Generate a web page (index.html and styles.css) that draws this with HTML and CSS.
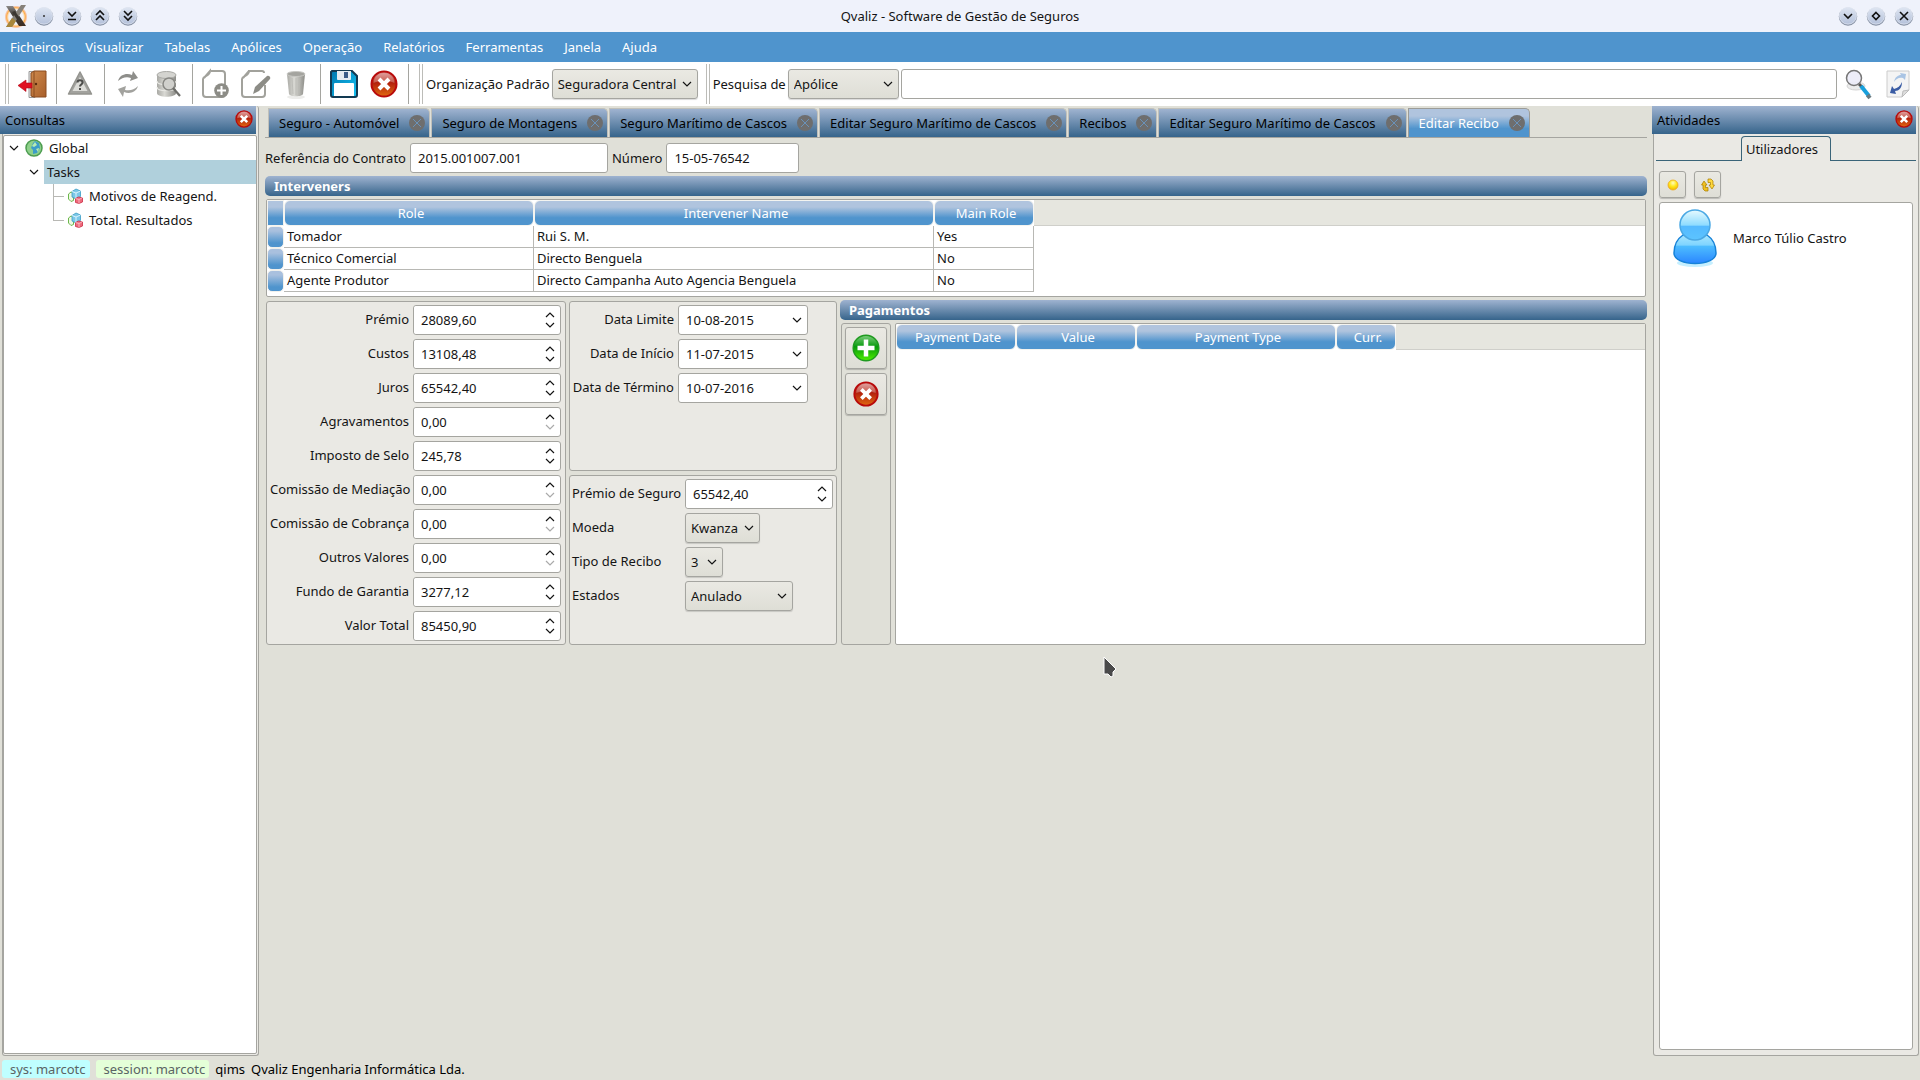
FILE: index.html
```html
<!DOCTYPE html>
<html lang="pt">
<head>
    <meta charset="UTF-8">
    <meta name="viewport" content="width=device-width, initial-scale=1.0">
    <title>Qvaliz - Software de Gestão de Seguros</title>
    <link rel="stylesheet" href="styles.css">
</head>
<body>
    <!-- shared icons -->
    <svg class="defs" width="0" height="0" aria-hidden="true">
        <defs>
            <linearGradient id="gRed" x1="0" y1="0" x2="0" y2="1">
                <stop offset="0" stop-color="#d98a8a"/><stop offset=".45" stop-color="#b3200c"/><stop offset="1" stop-color="#e06a10"/>
            </linearGradient>
            <linearGradient id="gGreen" x1="0" y1="0" x2="0" y2="1">
                <stop offset="0" stop-color="#7fce7f"/><stop offset=".45" stop-color="#069a0c"/><stop offset="1" stop-color="#4ff000"/>
            </linearGradient>
            <linearGradient id="gGrey" x1="0" y1="0" x2="1" y2="0">
                <stop offset="0" stop-color="#a9a9a4"/><stop offset=".4" stop-color="#d9d9d4"/><stop offset="1" stop-color="#8d8d88"/>
            </linearGradient>
            <linearGradient id="gDoor" x1="0" y1="0" x2="1" y2="1">
                <stop offset="0" stop-color="#cf8a4c"/><stop offset="1" stop-color="#a85f2a"/>
            </linearGradient>
            <linearGradient id="gSave" x1="0" y1="0" x2="1" y2="1">
                <stop offset="0" stop-color="#0078b0"/><stop offset="1" stop-color="#14c4f4"/>
            </linearGradient>
            <linearGradient id="gHead" x1="0" y1="0" x2="0" y2="1">
                <stop offset="0" stop-color="#e6faff"/><stop offset=".5" stop-color="#8fdcff"/><stop offset=".55" stop-color="#55baff"/><stop offset="1" stop-color="#5cc4ff"/>
            </linearGradient>
            <linearGradient id="gBody" x1="0" y1="0" x2="0" y2="1">
                <stop offset="0" stop-color="#a8e6ff"/><stop offset=".35" stop-color="#7fd4ff"/><stop offset=".4" stop-color="#4dbcff"/><stop offset="1" stop-color="#2a86ff"/>
            </linearGradient>
            <linearGradient id="gWin" x1="0" y1="0" x2="0" y2="1">
                <stop offset="0" stop-color="#dfe6f2"/><stop offset="1" stop-color="#b4c1da"/>
            </linearGradient>
            <linearGradient id="gLogo" x1="0" y1="0" x2="0" y2="1">
                <stop offset="0" stop-color="#8c8a88"/><stop offset=".4" stop-color="#45403c"/><stop offset="1" stop-color="#3a2c22"/>
            </linearGradient>
            <radialGradient id="gYellow" cx=".5" cy=".3" r=".7">
                <stop offset="0" stop-color="#fffbc0"/><stop offset=".5" stop-color="#ffe81c"/><stop offset="1" stop-color="#f2b400"/>
            </radialGradient>
            <radialGradient id="gFire" cx=".5" cy=".5" r=".5">
                <stop offset=".55" stop-color="#fff" stop-opacity="0"/><stop offset=".8" stop-color="#ffb04a"/><stop offset="1" stop-color="#ff7a3a" stop-opacity="0"/>
            </radialGradient>
        </defs>
        <symbol id="down" viewBox="0 0 10 6"><path d="M1 1l4 4 4-4" fill="none" stroke="currentColor" stroke-width="1.2"/></symbol>
        <symbol id="up" viewBox="0 0 10 6"><path d="M1 5l4-4 4 4" fill="none" stroke="currentColor" stroke-width="1.2"/></symbol>
        <symbol id="cancel" viewBox="0 0 28 28">
            <circle cx="14" cy="14" r="12.5" fill="url(#gRed)" stroke="#b80a0a" stroke-width="2"/>
            <path d="M3.5 13C4 6 9 3 14 3s10 3 10.5 10C18 10 10 10 3.5 13z" fill="#fff" opacity=".25"/>
            <path d="m9 9 10 10M19 9 9 19" stroke="#fff" stroke-width="4"/>
        </symbol>
        <symbol id="add" viewBox="0 0 28 28">
            <circle cx="14" cy="14" r="12.8" fill="url(#gGreen)" stroke="#1f9a1f" stroke-width="1.5"/>
            <path d="M14 5.5v17M5.5 14h17" stroke="#fff" stroke-width="4.5"/>
        </symbol>
        <symbol id="tabx" viewBox="0 0 16 16">
            <circle cx="8" cy="8" r="8" fill="#6e6e6e"/>
            <path d="m4 4 8 8M12 4l-8 8" stroke="#6a92b8" stroke-width="1"/>
        </symbol>
        <symbol id="winbtn" viewBox="0 0 20 20">
            <circle cx="10" cy="10.5" r="9.2" fill="#8590a4"/>
            <circle cx="10" cy="9.6" r="8.6" fill="url(#gWin)" stroke="#eef2fa" stroke-width=".6"/>
        </symbol>
        <symbol id="cubes" viewBox="0 0 16 16">
            <path d="M4 4 1.5 6v5L4 13.500l2.500-1V5z" fill="#eef8e4" stroke="#6cb84c"/>
            <path d="M5 3.500 9 1l4.500 2v5.500L9 11 5 9z" fill="#7cc8e8" stroke="#3a9cc4" stroke-width=".8"/>
            <path d="m5 3.500 4 1.500 4.500-2M9 5v6" fill="none" stroke="#e4f8ff" stroke-width=".9"/>
            <path d="m8.500 10.500 3-1.500 4 1v4L12 15.500l-3.500-1z" fill="#ee6a7c" stroke="#cc2c44" stroke-width=".8"/>
            <path d="m8.500 10.500 3.500 1 3-1.500M12 11.500v4" fill="none" stroke="#fbc4cc" stroke-width=".8"/>
        </symbol>
    </svg>

    <header class="titlebar">
        <div class="window-buttons left">
            <svg class="logo" width="24" height="24" viewBox="0 0 24 24">
                <circle cx="12" cy="13" r="11.5" fill="url(#gFire)"/>
                <path d="M2 2h7l13 20h-7z" fill="url(#gLogo)"/>
                <path d="M17 1h5L8 23H2z" fill="#86817a"/>
                <path d="M2 23h6l4-6-4-3z" fill="#a8863a"/>
                <path d="m8 8 3-1 6 9-3 1z" fill="#3a3632"/>
            </svg>
            <button aria-label="Menu"><svg viewBox="0 0 20 20"><use href="#winbtn"/><circle cx="10" cy="10" r="1" fill="#333"/></svg></button>
            <button aria-label="Abaixo"><svg viewBox="0 0 20 20"><use href="#winbtn"/><path d="m6 6 4 4 4-4M6 13.5h8" class="glyph"/></svg></button>
            <button aria-label="Acima"><svg viewBox="0 0 20 20"><use href="#winbtn"/><path d="m6 9 4-4 4 4M6 14l4-4 4 4" class="glyph"/></svg></button>
            <button aria-label="Enrolar"><svg viewBox="0 0 20 20"><use href="#winbtn"/><path d="m6 5 4 4 4-4M6 10l4 4 4-4" class="glyph"/></svg></button>
        </div>
        <h1>Qvaliz - Software de Gestão de Seguros</h1>
        <div class="window-buttons right">
            <button aria-label="Minimizar"><svg viewBox="0 0 20 20"><use href="#winbtn"/><path d="m6 8 4 4 4-4" class="glyph"/></svg></button>
            <button aria-label="Maximizar"><svg viewBox="0 0 20 20"><use href="#winbtn"/><path d="m10 6.500 3.500 3.500-3.500 3.500L6.500 10z" class="glyph"/></svg></button>
            <button aria-label="Fechar"><svg viewBox="0 0 20 20"><use href="#winbtn"/><path d="m6 6 8 8M14 6l-8 8" class="glyph"/></svg></button>
        </div>
    </header>

    <nav class="menubar">
        <a href="#">Ficheiros</a>
        <a href="#">Visualizar</a>
        <a href="#">Tabelas</a>
        <a href="#">Apólices</a>
        <a href="#">Operação</a>
        <a href="#">Relatórios</a>
        <a href="#">Ferramentas</a>
        <a href="#">Janela</a>
        <a href="#">Ajuda</a>
    </nav>

    <div class="toolbar">
        <span class="handle"></span>
        <button aria-label="Sair">
            <svg viewBox="0 0 32 32">
                <path d="M13 3.500h6v26h-6z" fill="#e8e8e8" stroke="#999"/>
                <path d="m15 5 3-2h12v26H18l-3-1z" fill="url(#gDoor)" stroke="#8a4c20"/>
                <path d="M18 3v26" stroke="#8a4c20"/>
                <circle cx="20" cy="16" r="1.2" fill="#5a2c10"/>
                <path d="m2 17.500 8-5.500v3h6v5h-6v3.500z" fill="#e01020" stroke="#b00818" stroke-width=".6"/>
            </svg>
        </button>
        <span class="sep"></span>
        <button aria-label="Aviso">
            <svg viewBox="0 0 32 32">
                <path d="M16 4 27.500 26h-23z" fill="#a2a29e" stroke="#94948f" stroke-width="1.5" stroke-linejoin="round"/>
                <path d="m16 9 7.500 14h-15z" fill="#dcdcd8"/>
                <path d="M13.500 14.500c0-3 5-3 5 0 0 2-2.500 2-2.500 4M16 20v2" fill="none" stroke="#4c4c4a" stroke-width="2"/>
            </svg>
        </button>
        <span class="sep"></span>
        <button aria-label="Atualizar">
            <svg viewBox="0 0 32 32">
                <path d="M6 13c2-7 9-8 14-6l1-4 5 7-8 3 1-3c-5-2-9 0-13 3z" fill="#8e8e8a"/>
                <path d="M26 18c-2 7-9 8-14 6l-1 5-5-8 8-3-1 4c5 1 9 0 13-4z" fill="#a2a29e"/>
            </svg>
        </button>
        <button aria-label="Consultar dados">
            <svg viewBox="0 0 32 32">
                <path d="M5 7v18c0 5 19 5 19 0V7z" fill="url(#gGrey)"/>
                <ellipse cx="14.500" cy="7" rx="9.500" ry="3.500" fill="#d4d4d0" stroke="#aaaaa6"/>
                <path d="M5 13c0 5 19 5 19 0M5 19c0 5 19 5 19 0" fill="none" stroke="#e8e8e4" stroke-width="1.2"/>
                <circle cx="17" cy="16" r="6" fill="#d0d0cc" stroke="#888884" stroke-width="1.5"/>
                <path d="m21 20 7 8" stroke="#6e6e6a" stroke-width="2.2"/>
            </svg>
        </button>
        <span class="sep"></span>
        <button aria-label="Novo">
            <svg viewBox="0 0 32 32">
                <path d="M11 3h11c2 0 3 1 3 3v20c0 2-1 3-3 3H6c-2 0-3-1-3-3V11c0-3 7-3 7-8L4 10" fill="none" stroke="#a2a29c" stroke-width="2"/>
                <circle cx="21.500" cy="22.500" r="7.3" fill="#8c8c86"/>
                <path d="M21.500 18v9M17 22.500h9" stroke="#fff" stroke-width="2"/>
            </svg>
        </button>
        <button aria-label="Editar">
            <svg viewBox="0 0 32 32">
                <path d="M25 17v9c0 2-1 3-3 3H5c-2 0-3-1-3-3V11c0-3 7-3 7-8h13c1 0 2 1 2 2M9 3l-6 7" fill="none" stroke="#a2a29c" stroke-width="2"/>
                <path d="m13 26 2-7L27 8c2-1 4 1 3 3L19 23z" fill="#8c8c86"/>
            </svg>
        </button>
        <button aria-label="Apagar">
            <svg viewBox="0 0 32 32">
                <ellipse cx="16" cy="29" rx="9" ry="2" fill="#ededeb"/>
                <path d="m7 6 2 20c1 3 13 3 14 0l2-20z" fill="url(#gGrey)"/>
                <ellipse cx="16" cy="6" rx="9" ry="2.5" fill="#a4a49f" stroke="#c8c8c4"/>
                <path d="m12 10 1 16M16 10v17M20 10l-1 16" stroke="#babab5" stroke-width=".8"/>
            </svg>
        </button>
        <span class="sep"></span>
        <button aria-label="Guardar">
            <svg viewBox="0 0 32 32">
                <path d="M4 3h20l5 5v19c0 1-1 2-2 2H5c-1 0-2-1-2-2V4z" fill="url(#gSave)" stroke="#123a52" stroke-width="2"/>
                <path d="M9 3h14v8c0 1-1 1-1 1H10s-1 0-1-1z" fill="#e4ecf2"/>
                <path d="M16 4h4v6h-4z" fill="#3a5c88"/>
                <path d="M7 15h18c1 0 1 1 1 1v12H6V16c0-1 1-1 1-1z" fill="#fff"/>
            </svg>
        </button>
        <button aria-label="Cancelar"><svg viewBox="-2 -2 32 32"><use href="#cancel" width="28" height="28"/></svg></button>
        <span class="sep"></span>

        <span class="handle"></span>
        <label for="org">Organização Padrão</label>
        <div class="combo org">
            <select id="org"><option>Seguradora Central</option></select>
            <svg><use href="#down"/></svg>
        </div>
        <span class="handle"></span>
        <label for="searchBy">Pesquisa de</label>
        <div class="combo search-by">
            <select id="searchBy"><option>Apólice</option></select>
            <svg><use href="#down"/></svg>
        </div>
        <input type="text" class="search" aria-label="Pesquisa">
        <button aria-label="Pesquisar">
            <svg viewBox="0 0 32 32">
                <ellipse cx="14" cy="18" rx="9" ry="4" fill="#ececec" stroke="#d4d4d4"/>
                <path d="m17 16 4 4" stroke="#555" stroke-width="3"/>
                <path d="m19 18 8 10" stroke="#18a0dc" stroke-width="4"/>
                <path d="m25.500 27 2.500 3" stroke="#6a7a80" stroke-width="4"/>
                <circle cx="12" cy="10" r="7.5" fill="#ececf8" fill-opacity=".9" stroke="#777" stroke-width="1.5"/>
            </svg>
        </button>
        <button aria-label="Recarregar">
            <svg viewBox="0 0 32 32">
                <path d="M5 3h22v19l-7 7H5z" fill="#f4f4f4" stroke="#ccc"/>
                <path d="m20 29 1-6 6-1z" fill="#ddd" stroke="#bbb"/>
                <path d="M12 14c1-5 4-7 7-7l-1-2 6 1-1 6-2-2c-4-1-7 1-9 4z" fill="#a9c4e4"/>
                <path d="M20 14c0 6-3 9-7 9l1 3-6-1 2-7 2 3c4-1 6-3 8-7z" fill="#3a5ca4"/>
            </svg>
        </button>
    </div>

    <div class="workspace">
        <aside class="dock queries">
            <div class="dock-title">
                <h2>Consultas</h2>
                <button aria-label="Fechar Consultas"><svg viewBox="0 0 28 28"><use href="#cancel"/></svg></button>
            </div>
            <ul class="tree">
                <li>
                    <div class="node root">
                        <svg class="arrow"><use href="#down"/></svg>
                        <svg width="18" height="18" viewBox="0 0 18 18">
                            <circle cx="9" cy="9" r="8" fill="#8ed08a" stroke="#4c9c50" stroke-width="1.5"/>
                            <path d="m10 2 4 2 1 5-3 5-4 1v-4L6 9l2-5z" fill="#3c9cc8"/>
                            <path d="m10 3-3 4 2 1 3-2zM11 10l3-1-1 4z" fill="#b8ecb0"/>
                        </svg>
                        <span>Global</span>
                    </div>
                    <ul>
                        <li>
                            <div class="node branch">
                                <svg class="arrow"><use href="#down"/></svg>
                                <span class="selected">Tasks</span>
                            </div>
                            <ul class="leaves">
                                <li class="node"><svg width="16" height="16"><use href="#cubes"/></svg><span>Motivos de Reagend.</span></li>
                                <li class="node"><svg width="16" height="16"><use href="#cubes"/></svg><span>Total. Resultados</span></li>
                            </ul>
                        </li>
                    </ul>
                </li>
            </ul>
        </aside>

        <main>
            <div class="tabs">
                <div class="tab"><button>Seguro - Automóvel</button><button class="close" aria-label="Fechar separador"><svg><use href="#tabx"/></svg></button></div>
                <div class="tab"><button>Seguro de Montagens</button><button class="close" aria-label="Fechar separador"><svg><use href="#tabx"/></svg></button></div>
                <div class="tab"><button>Seguro Marítimo de Cascos</button><button class="close" aria-label="Fechar separador"><svg><use href="#tabx"/></svg></button></div>
                <div class="tab"><button>Editar Seguro Marítimo de Cascos</button><button class="close" aria-label="Fechar separador"><svg><use href="#tabx"/></svg></button></div>
                <div class="tab"><button>Recibos</button><button class="close" aria-label="Fechar separador"><svg><use href="#tabx"/></svg></button></div>
                <div class="tab"><button>Editar Seguro Marítimo de Cascos</button><button class="close" aria-label="Fechar separador"><svg><use href="#tabx"/></svg></button></div>
                <div class="tab active"><button>Editar Recibo</button><button class="close" aria-label="Fechar separador"><svg><use href="#tabx"/></svg></button></div>
            </div>

            <div class="contract">
                <label for="ref">Referência do Contrato</label>
                <input type="text" id="ref" class="ref" value="2015.001007.001">
                <label for="num">Número</label>
                <input type="text" id="num" class="num" value="15-05-76542">
            </div>

            <h2 class="section-title">Interveners</h2>
            <div class="grid-box interveners">
                <table>
                    <colgroup><col class="c-mark"><col class="c-role"><col class="c-name"><col class="c-main"><col></colgroup>
                    <thead>
                        <tr><th class="corner"></th><th>Role</th><th>Intervener Name</th><th>Main Role</th><td class="rest"></td></tr>
                    </thead>
                    <tbody>
                        <tr><th></th><td>Tomador</td><td>Rui S. M.</td><td>Yes</td></tr>
                        <tr><th></th><td>Técnico Comercial</td><td>Directo Benguela</td><td>No</td></tr>
                        <tr><th></th><td>Agente Produtor</td><td>Directo Campanha Auto Agencia Benguela</td><td>No</td></tr>
                    </tbody>
                </table>
            </div>

            <div class="details">
                <div class="panel amounts">
                    <label for="premio">Prémio</label>
                    <div class="spin"><input id="premio" value="28089,60"><div class="steps"><button aria-label="Mais"><svg><use href="#up"/></svg></button><button aria-label="Menos"><svg><use href="#down"/></svg></button></div></div>
                    <label for="custos">Custos</label>
                    <div class="spin"><input id="custos" value="13108,48"><div class="steps"><button aria-label="Mais"><svg><use href="#up"/></svg></button><button aria-label="Menos"><svg><use href="#down"/></svg></button></div></div>
                    <label for="juros">Juros</label>
                    <div class="spin"><input id="juros" value="65542,40"><div class="steps"><button aria-label="Mais"><svg><use href="#up"/></svg></button><button aria-label="Menos"><svg><use href="#down"/></svg></button></div></div>
                    <label for="agrav">Agravamentos</label>
                    <div class="spin"><input id="agrav" value="0,00"><div class="steps"><button aria-label="Mais"><svg><use href="#up"/></svg></button><button aria-label="Menos" disabled><svg><use href="#down"/></svg></button></div></div>
                    <label for="selo">Imposto de Selo</label>
                    <div class="spin"><input id="selo" value="245,78"><div class="steps"><button aria-label="Mais"><svg><use href="#up"/></svg></button><button aria-label="Menos"><svg><use href="#down"/></svg></button></div></div>
                    <label for="mediacao">Comissão de Mediação</label>
                    <div class="spin"><input id="mediacao" value="0,00"><div class="steps"><button aria-label="Mais"><svg><use href="#up"/></svg></button><button aria-label="Menos" disabled><svg><use href="#down"/></svg></button></div></div>
                    <label for="cobranca">Comissão de Cobrança</label>
                    <div class="spin"><input id="cobranca" value="0,00"><div class="steps"><button aria-label="Mais"><svg><use href="#up"/></svg></button><button aria-label="Menos" disabled><svg><use href="#down"/></svg></button></div></div>
                    <label for="outros">Outros Valores</label>
                    <div class="spin"><input id="outros" value="0,00"><div class="steps"><button aria-label="Mais"><svg><use href="#up"/></svg></button><button aria-label="Menos" disabled><svg><use href="#down"/></svg></button></div></div>
                    <label for="fundo">Fundo de Garantia</label>
                    <div class="spin"><input id="fundo" value="3277,12"><div class="steps"><button aria-label="Mais"><svg><use href="#up"/></svg></button><button aria-label="Menos"><svg><use href="#down"/></svg></button></div></div>
                    <label for="total">Valor Total</label>
                    <div class="spin"><input id="total" value="85450,90"><div class="steps"><button aria-label="Mais"><svg><use href="#up"/></svg></button><button aria-label="Menos"><svg><use href="#down"/></svg></button></div></div>
                </div>

                <div class="middle">
                    <div class="panel dates">
                        <label for="limite">Data Limite</label>
                        <div class="combo date"><select id="limite"><option>10-08-2015</option></select><svg><use href="#down"/></svg></div>
                        <label for="inicio">Data de Início</label>
                        <div class="combo date"><select id="inicio"><option>11-07-2015</option></select><svg><use href="#down"/></svg></div>
                        <label for="termino">Data de Término</label>
                        <div class="combo date"><select id="termino"><option>10-07-2016</option></select><svg><use href="#down"/></svg></div>
                    </div>
                    <div class="panel receipt">
                        <label for="seguro">Prémio de Seguro</label>
                        <div class="spin"><input id="seguro" value="65542,40"><div class="steps"><button aria-label="Mais"><svg><use href="#up"/></svg></button><button aria-label="Menos"><svg><use href="#down"/></svg></button></div></div>
                        <label for="moeda">Moeda</label>
                        <div class="combo currency"><select id="moeda"><option>Kwanza</option></select><svg><use href="#down"/></svg></div>
                        <label for="tipo">Tipo de Recibo</label>
                        <div class="combo type"><select id="tipo"><option>3</option></select><svg><use href="#down"/></svg></div>
                        <label for="estado">Estados</label>
                        <div class="combo state"><select id="estado"><option>Anulado</option></select><svg><use href="#down"/></svg></div>
                    </div>
                </div>

                <div class="payments">
                    <h2 class="section-title">Pagamentos</h2>
                    <div class="payments-body">
                        <div class="actions">
                            <button aria-label="Adicionar pagamento"><svg viewBox="0 0 28 28"><use href="#add"/></svg></button>
                            <button aria-label="Remover pagamento"><svg viewBox="-1 -1 30 30"><use href="#cancel" width="28" height="28"/></svg></button>
                        </div>
                        <div class="grid-box">
                            <table>
                                <colgroup><col class="c-date"><col class="c-value"><col class="c-type"><col class="c-curr"><col></colgroup>
                                <thead>
                                    <tr><th>Payment Date</th><th>Value</th><th>Payment Type</th><th>Curr.</th><td class="rest"></td></tr>
                                </thead>
                            </table>
                        </div>
                    </div>
                </div>
            </div>

            <svg class="cursor" width="16" height="24" viewBox="0 0 16 24">
                <path d="M2 2v17h4l3 3 2-1v-4l3-3z" fill="#4a4a4a" stroke="#fff" stroke-width="1"/>
            </svg>
        </main>

        <aside class="dock activities">
            <div class="dock-title">
                <h2>Atividades</h2>
                <button aria-label="Fechar Atividades"><svg viewBox="0 0 28 28"><use href="#cancel"/></svg></button>
            </div>
            <div class="side-tabs"><button>Utilizadores</button></div>
            <div class="side-tools">
                <button aria-label="Estado"><svg width="16" height="16" viewBox="0 0 16 16"><circle cx="8" cy="8" r="5" fill="url(#gYellow)" stroke="#eda820" stroke-width=".8"/></svg></button>
                <button aria-label="Atualizar utilizadores">
                    <svg width="16" height="16" viewBox="0 0 16 16">
                        <path d="M3 12V8H1.500L4 4l3 4H5.500v2.500H8V14H5z" fill="#f0c020" stroke="#a87c00" stroke-width=".7"/>
                        <path d="M13 4v4h1.500L12 12 9 8h1.500V5.500H8V2h3z" fill="#ffd83a" stroke="#a87c00" stroke-width=".7"/>
                    </svg>
                </button>
            </div>
            <ul class="users">
                <li>
                    <svg width="46" height="60" viewBox="0 0 46 60">
                        <ellipse cx="23" cy="55" rx="18" ry="4" fill="#9fe4ff" opacity=".6"/>
                        <path d="M11 27C5 31 2 38 2 45c0 14 42 14 42 0 0-7-3-14-9-18z" fill="url(#gBody)" stroke="#1682d8" stroke-width="1.5"/>
                        <circle cx="23" cy="17" r="15" fill="url(#gHead)" stroke="#4aa8e4" stroke-width="1.5"/>
                    </svg>
                    <span>Marco Túlio Castro</span>
                </li>
            </ul>
        </aside>
    </div>

    <footer class="statusbar">
        <span class="pill sys">sys: marcotc</span>
        <span class="pill session">session: marcotc</span>
        <span>qims</span>
        <span>Qvaliz Engenharia Informática Lda.</span>
    </footer>
</body>
</html>
```
FILE: styles.css
```css
* {
    box-sizing: border-box;
}

body {
    margin: 0;
    height: 100vh;
    display: flex;
    flex-direction: column;
    font-family: 'Noto Sans', 'Open Sans', sans-serif;
    font-size: 13px;
    line-height: 18px;
    color: #141414;
    background-color: #e0e0d8;
}

button, input, select {
    font: inherit;
    color: inherit;
}

button {
    padding: 0;
    border: none;
    background: none;
}

h1, h2 {
    margin: 0;
    font-size: 13px;
    font-weight: normal;
}

ul {
    margin: 0;
    padding: 0;
    list-style: none;
}

svg {
    display: block;
    flex: none;
}

.defs {
    position: absolute;
}

/* title bar */
.titlebar {
    display: grid;
    grid-template-columns: 1fr auto 1fr;
    align-items: center;
    height: 32px;
    background-color: #eff2fb;
}

.window-buttons {
    display: flex;
    align-items: center;
    gap: 8px;
    padding: 0 6px 0 4px;
}

.window-buttons.right {
    justify-content: flex-end;
}

.window-buttons button svg {
    width: 20px;
    height: 20px;
}

.logo {
    margin-right: -2px;
}

.glyph {
    fill: none;
    stroke: #111;
    stroke-width: 1.6;
}

/* menu */
.menubar {
    display: flex;
    height: 30px;
    background-color: #4f94cd;
}

.menubar a {
    padding: 6px 11px 6px 10px;
    color: #fff;
    text-decoration: none;
}

/* toolbar */
.toolbar {
    display: flex;
    align-items: center;
    height: 44px;
    padding: 0 2px 0 5px;
    background-color: #fff;
}

.toolbar > button {
    width: 40px;
    display: flex;
    justify-content: center;
}

.toolbar > button svg {
    width: 32px;
    height: 32px;
}

.sep {
    height: 40px;
    margin: 0 3px 0 4px;
    border-left: 1px solid #a5a5a0;
}

.handle {
    width: 4px;
    height: 40px;
    margin-right: 3px;
    border: 1px solid #bcbcb8;
    border-width: 0 1px;
}

.sep + .handle {
    margin-left: 7px;
}

.combo + .handle {
    margin-left: 8px;
}

.toolbar label {
    margin-right: 2px;
}

.search {
    flex: 1;
    margin: 0 1px 0 2px;
}

/* fields */
input, .spin, .combo select {
    height: 30px;
    border: 1px solid #a5a5a0;
    border-radius: 3px;
    background-color: #fff;
}

input {
    padding: 0 7px;
}

.spin {
    display: flex;
    width: 148px;
}

.spin input {
    flex: 1;
    min-width: 0;
    height: 28px;
    border: none;
}

.steps {
    display: flex;
    flex-direction: column;
    justify-content: center;
    gap: 4px;
    padding-right: 5px;
}

.steps svg {
    width: 10px;
    height: 6px;
}

.steps button:disabled {
    color: #aaa;
}

.combo {
    position: relative;
    display: flex;
}

.combo select {
    width: 100%;
    padding: 0 5px;
    appearance: none;
    background: linear-gradient(#eae9e3, #deded6);
    box-shadow: 0 1px 1px rgba(0, 0, 0, 0.15);
}

.combo svg {
    position: absolute;
    right: 6px;
    top: 12px;
    width: 10px;
    height: 6px;
    pointer-events: none;
}

.combo.date select {
    padding: 0 7px;
    background: #fff;
    box-shadow: none;
}

.org {
    width: 146px;
}

.search-by {
    width: 111px;
}

/* docks */
.workspace {
    flex: 1;
    min-height: 0;
    display: flex;
}

.dock {
    display: flex;
    flex-direction: column;
    margin-bottom: 2px;
    border: 1px solid #a5a5a0;
    border-top: none;
    border-radius: 3px;
    background-color: #eae9e4;
}

.queries {
    width: 257px;
    margin-left: 2px;
}

.activities {
    width: 266px;
    margin-right: 1px;
    margin-left: 4px;
}

.dock-title {
    display: flex;
    justify-content: space-between;
    align-items: center;
    height: 28px;
    margin-right: 2px;
    padding: 0 3px 0 5px;
    color: #000;
    background: linear-gradient(#9fb3d0, #36648b);
}

.queries .dock-title {
    margin-left: -3px;
}

.activities .dock-title {
    margin-left: -2px;
}

.dock-title button {
    margin-bottom: 2px;
}

.dock-title svg {
    width: 18px;
    height: 18px;
}

/* tree */
.tree {
    flex: 1;
    margin: 1px 1px 1px 0;
    border: 1px solid #a5a5a0;
    border-radius: 2px;
    background-color: #fff;
}

.node {
    display: flex;
    align-items: center;
    height: 24px;
    gap: 6px;
}

.root {
    padding-left: 5px;
}

.arrow {
    width: 10px;
    height: 6px;
}

.branch {
    padding-left: 25px;
}

.selected {
    flex: 1;
    margin-left: -1px;
    padding: 3px;
    background-color: #b0d0dc;
}

.leaves {
    margin-left: 49px;
}

.leaves .node {
    position: relative;
    padding-left: 14px;
}

/* branch lines */
.leaves .node::before {
    content: '';
    position: absolute;
    left: 0;
    top: 0;
    width: 10px;
    height: 12px;
    border: 1px solid #b8b8b4;
    border-width: 0 0 1px 1px;
}

.leaves .node:first-child::after {
    content: '';
    position: absolute;
    left: 0;
    top: 12px;
    height: 12px;
    border-left: 1px solid #b8b8b4;
}

/* right dock */
.side-tabs {
    display: flex;
    margin: 2px 2px 0 2px;
}

.side-tabs::before, .side-tabs::after {
    content: '';
    flex: 1;
    border-bottom: 1px solid #3a6478;
}

.side-tabs button {
    height: 25px;
    padding: 0 12px 0 4px;
    border: 1px solid #3a6478;
    border-bottom: none;
    border-radius: 4px 4px 0 0;
}

.side-tools {
    display: flex;
    gap: 8px;
    margin: 10px 5px 4px;
}

.side-tools button, .actions button {
    display: flex;
    align-items: center;
    justify-content: center;
    width: 27px;
    height: 27px;
    border: 1px solid #a5a5a0;
    border-radius: 3px;
    background: linear-gradient(#eae9e3, #deded6);
    box-shadow: 0 1px 1px rgba(0, 0, 0, 0.2);
}

.users {
    flex: 1;
    margin: 0 5px 5px;
    border: 1px solid #a5a5a0;
    border-radius: 3px;
    background-color: #fff;
}

.users li {
    display: flex;
    align-items: center;
    gap: 15px;
    padding: 5px 12px;
}

/* document area */
main {
    position: relative;
    flex: 1;
    min-width: 0;
    padding: 2px 2px 0 6px;
}

.tabs {
    display: flex;
    height: 30px;
    padding-left: 3px;
    gap: 1px;
    border-bottom: 1px solid #a5a5a0;
}

.tab {
    display: flex;
    align-items: center;
    gap: 10px;
    padding: 0 4px 0 10px;
    border: 1px solid #c0c0ba;
    border-bottom: none;
    border-radius: 0 5px 0 0;
    color: #000;
    background: linear-gradient(#9fb3d0, #36648b);
}

.tab.active {
    color: #fff;
    border-color: #9c9c98;
    background: linear-gradient(#b0c4de 25%, #4f94cd 70%);
}

.tab svg {
    width: 16px;
    height: 16px;
}

.contract {
    display: flex;
    align-items: center;
    gap: 4px;
    padding: 5px 0 3px;
}

.ref {
    width: 198px;
}

.num {
    width: 133px;
}

.section-title {
    height: 20px;
    padding: 0 9px;
    border-radius: 5px;
    font-weight: bold;
    line-height: 20px;
    color: #fff;
    background: linear-gradient(#9fb3d0, #36648b);
}

.grid-box {
    border: 1px solid #a5a5a0;
    border-radius: 2px;
    background-color: #fff;
}

.interveners {
    height: 98px;
    margin: 3px 1px;
}

table {
    width: 100%;
    table-layout: fixed;
    border-collapse: separate;
    border-spacing: 0;
}

thead th {
    height: 26px;
    padding: 0 0 0 4px;
    border: 1px solid #f4f4f0;
    border-radius: 6px;
    font-weight: normal;
    color: #fff;
    background: linear-gradient(#b0c4de 25%, #4f94cd 70%);
}

thead .corner {
    border-radius: 0;
}

.rest {
    border-bottom: 1px solid #cfcfca;
    background-color: #e6e6df;
}

tbody th {
    height: 22px;
    border: 1px solid #f0f0ec;
    border-radius: 5px;
    background: linear-gradient(#a9c0de 20%, #4f94cd 80%);
}

tbody td {
    height: 22px;
    padding: 0 3px 2px;
    border: 1px solid #b8b8b4;
    border-width: 0 1px 1px 0;
}

.c-mark {
    width: 17px;
}

.c-role {
    width: 250px;
}

.c-name {
    width: 400px;
}

.c-main {
    width: 100px;
}

/* receipt details */
.details {
    display: flex;
    gap: 3px;
    padding-left: 1px;
}

.panel {
    display: grid;
    align-items: start;
    align-content: start;
    gap: 4px;
    padding: 3px;
    border: 1px solid #a5a5a0;
    border-radius: 3px;
    background-color: #eae9e4;
}

.panel label {
    padding-top: 5px;
    white-space: nowrap;
}

.details > .panel, .middle {
    margin-top: 1px;
}

.amounts {
    grid-template-columns: 139px 148px;
    width: 300px;
    text-align: right;
}

.amounts .spin {
    text-align: left;
}

.middle {
    display: grid;
    grid-template-rows: 1fr 1fr;
    gap: 4px;
    width: 268px;
}

.dates {
    grid-template-columns: 102px 130px;
    text-align: right;
    padding-left: 2px;
}

.receipt {
    grid-template-columns: 109px 148px;
    padding-left: 2px;
}

.currency {
    width: 75px;
}

.type {
    width: 38px;
}

.state {
    width: 108px;
}

.payments {
    flex: 1;
    min-width: 0;
    display: flex;
    flex-direction: column;
}

.payments-body {
    flex: 1;
    display: flex;
    gap: 4px;
    margin: 3px 1px 0;
}

.payments .grid-box {
    flex: 1;
}

.actions {
    display: flex;
    flex-direction: column;
    gap: 4px;
    padding: 3px;
    border: 1px solid #a5a5a0;
    border-radius: 3px;
}

.actions button {
    width: 42px;
    height: 42px;
}

.actions svg {
    width: 28px;
    height: 28px;
}

.c-date, .c-value {
    width: 120px;
}

.c-type {
    width: 200px;
}

.c-curr {
    width: 60px;
}

/* mouse pointer */
.cursor {
    position: absolute;
    left: 843px;
    top: 549px;
}

/* status bar */
.statusbar {
    display: flex;
    align-items: center;
    gap: 6px;
    height: 22px;
    padding: 0 2px;
    color: #000;
}

.pill {
    padding: 0 4px 0 8px;
    border-radius: 3px;
    color: #5a6464;
}

.sys {
    background-color: #bfffff;
}

.session {
    background-color: #e4ffd8;
}
```
